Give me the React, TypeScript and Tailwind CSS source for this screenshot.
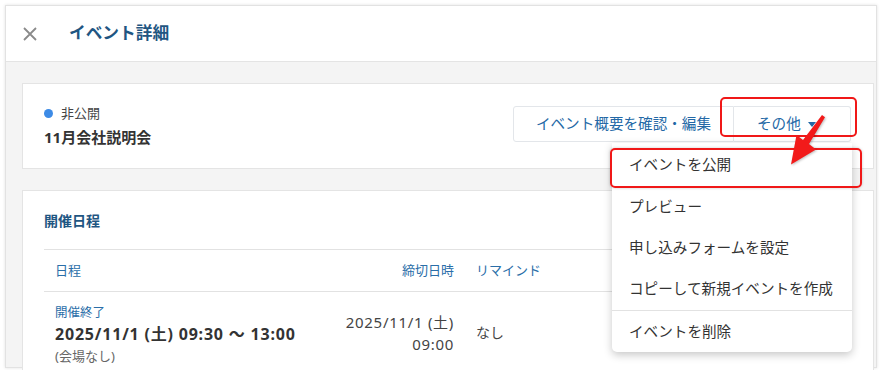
import React from "react";

const font = { fontFamily: '"Noto Sans", "Noto Sans CJK JP", sans-serif' };

export default function App() {
  return (
    <div className="relative w-[883px] h-[370px] bg-white overflow-hidden" style={font}>
      <div className="ml-[5px] mt-[5px] w-[872px] h-[363px] border border-[#e2e2e2] shadow-[0_0_3px_rgba(0,0,0,0.12)] bg-[#f4f4f4] flex flex-col">
        {/* header */}
        <div className="h-[56px] bg-white border-b border-[#e4e4e4] flex items-center shrink-0">
          <svg className="ml-[16px]" width="16" height="16" viewBox="0 0 16 16">
            <path d="M2 2 L14 14 M14 2 L2 14" stroke="#8a8a8a" strokeWidth="1.8" fill="none" />
          </svg>
          <div className="ml-[31px] mt-[-1px] text-[16.7px] font-bold text-[#1f5682] leading-none">イベント詳細</div>
        </div>
        {/* content */}
        <div className="pl-[16px] pr-[2px] pt-[21px] flex flex-col gap-[21px]">
          {/* card 1 */}
          <div className="h-[86px] bg-white border border-[#e4e4e4] flex items-center justify-between pl-[21px] pr-[22px]">
            <div className="flex flex-col">
              <div className="flex items-center h-[18px]">
                <span className="w-[9px] h-[9px] rounded-full bg-[#3d8be6] mr-[8px]" />
                <span className="text-[13px] text-[#444]">非公開</span>
              </div>
              <div className="mt-[3px] text-[15px] font-bold text-[#333] leading-[22px]">11月会社説明会</div>
            </div>
            <div className="flex mt-[-4px]">
              <div className="w-[221px] h-[36px] border border-[#e3e6ea] rounded-l-[3px] flex items-center justify-center text-[14.6px] text-[#2368a6]">
                イベント概要を確認・編集
              </div>
              <div className="w-[117px] h-[36px] border border-l-0 border-[#e3e6ea] rounded-r-[3px] flex items-center pl-[23px] text-[14.6px] text-[#2368a6]">
                その他
                <svg className="ml-[7px]" width="8" height="5" viewBox="0 0 8 5">
                  <path d="M0 0 L8 0 L4 5 Z" fill="#2368a6" />
                </svg>
              </div>
            </div>
          </div>
          {/* card 2 */}
          <div className="bg-white border border-[#e4e4e4] px-[21px] h-[200px]">
            <div className="h-[58px] flex items-center pt-[1px] text-[14px] font-bold text-[#1f5682]">開催日程</div>
            <div className="border-t border-[#e2e2e2] h-[42px] flex items-center text-[13px] text-[#2a6ea8]">
              <div className="w-[300px] pl-[11px]">日程</div>
              <div className="w-[121px] pr-[11px] text-right">締切日時</div>
              <div className="pl-[11px]">リマインド</div>
            </div>
            <div className="border-t border-[#e2e2e2] flex pt-[11px]">
              <div className="w-[300px] pl-[11px] flex flex-col">
                <div className="text-[12.5px] text-[#2a6ea8] leading-[19px]">開催終了</div>
                <div className="text-[16px] font-bold text-[#333] leading-[24px] tracking-[0.8px] whitespace-nowrap">2025/11/1 (土) 09:30 ～ 13:00</div>
                <div className="text-[13px] text-[#666] leading-[20px]">(会場なし)</div>
              </div>
              <div className="w-[121px] pr-[11px] text-right text-[15px] text-[#444] leading-[22px] tracking-[0.7px] pt-[8px] whitespace-nowrap">
                <div>2025/11/1 (土)</div>
                <div>09:00</div>
              </div>
              <div className="pl-[11px] text-[14px] text-[#444] leading-[22px] pt-[19px]">なし</div>
            </div>
          </div>
        </div>
      </div>

      {/* dropdown menu */}
      <div className="absolute left-[612px] top-[143px] w-[240px] bg-white rounded-b-[5px] shadow-[0_3px_8px_rgba(0,0,0,0.22)] text-[14.6px] text-[#333] flex flex-col">
        <div className="h-[43px] flex items-center pl-[17px]">イベントを公開</div>
        <div className="h-[41px] flex items-center pl-[17px]">プレビュー</div>
        <div className="h-[41px] flex items-center pl-[17px]">申し込みフォームを設定</div>
        <div className="h-[42px] flex items-center pl-[17px]">コピーして新規イベントを作成</div>
        <div className="border-t border-[#e2e2e2] h-[42px] flex items-center pl-[17px]">イベントを削除</div>
      </div>

      {/* annotations */}
      <div className="absolute left-[720px] top-[97px] w-[137px] h-[40px] border-2 border-[#f01818] rounded-[5px]" />
      <div className="absolute left-[610px] top-[148px] w-[252px] h-[40px] border-2 border-[#f01818] rounded-[5px] shadow-[0_0_3px_rgba(0,0,0,0.2)]" />
      <svg className="absolute left-0 top-0" width="883" height="370" viewBox="0 0 883 370">
        <polygon
          points="822,115 825,117.2 809,144 816,149.5 791,164.5 796.5,135 803,140"
          fill="#f21a1a"
          style={{ filter: "drop-shadow(1px 1px 1px rgba(0,0,0,0.25))" }}
        />
      </svg>
    </div>
  );
}
